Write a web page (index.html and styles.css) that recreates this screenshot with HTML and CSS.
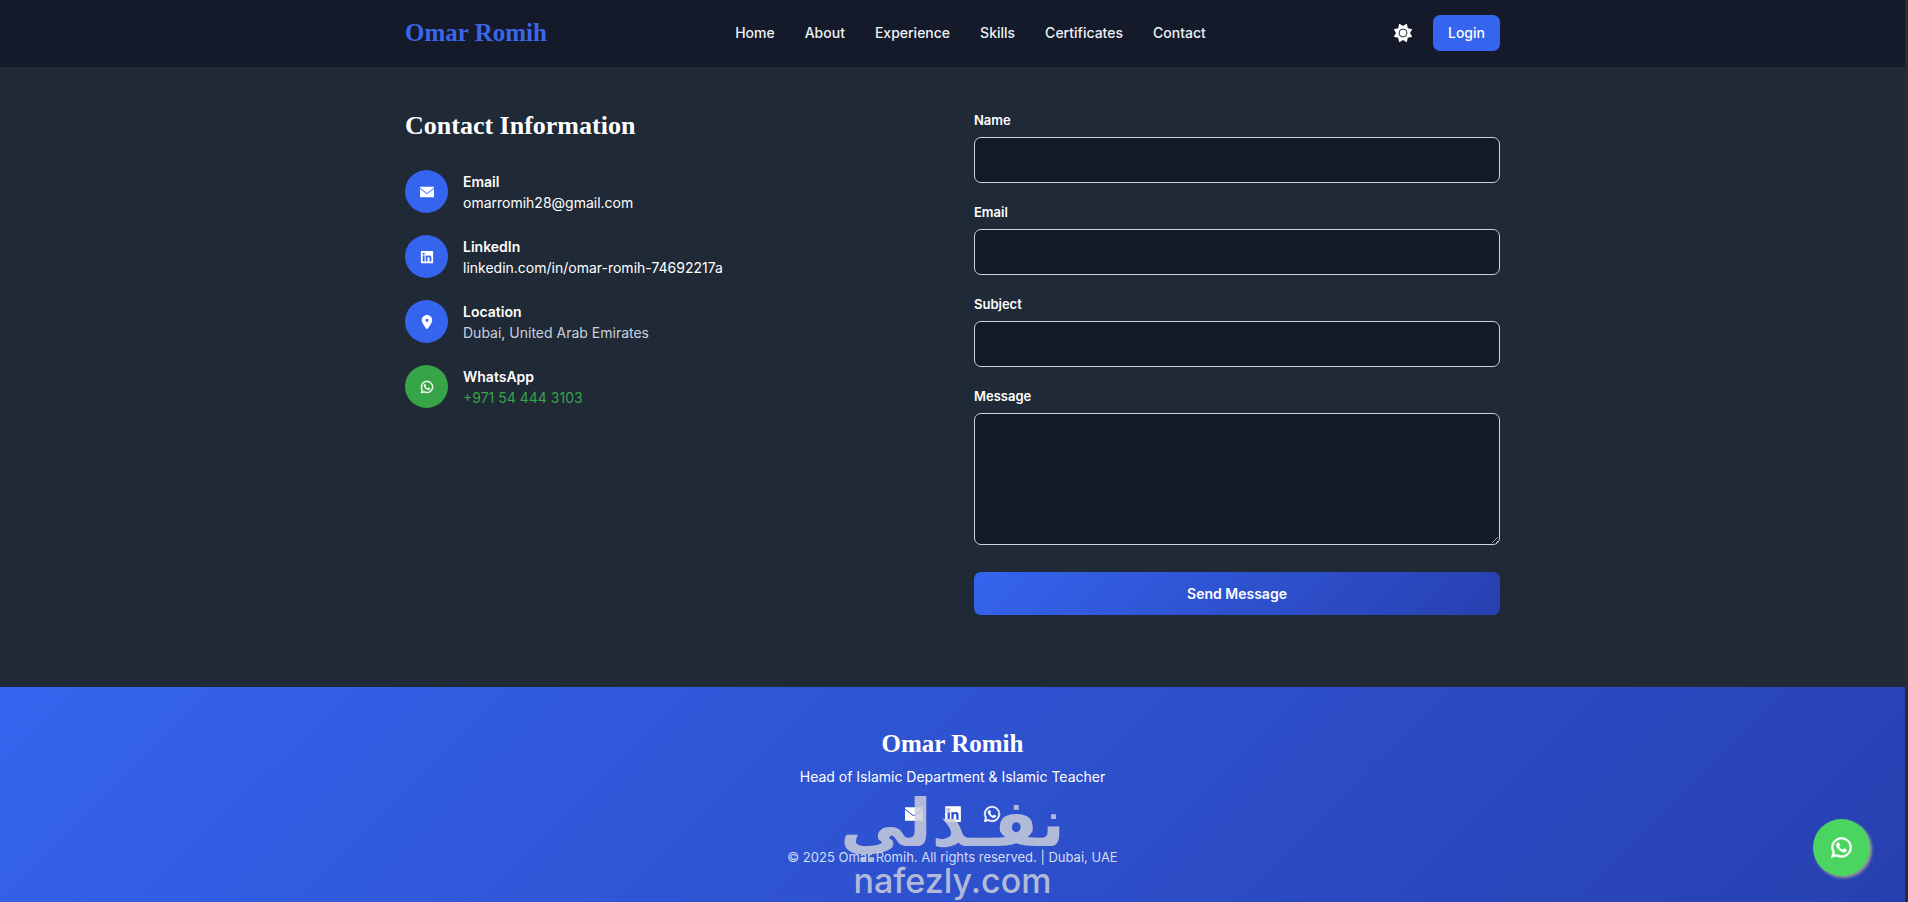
FILE: index.html
```html
<!doctype html>
<html lang="en">
<head>
    <meta charset="utf-8">
    <meta name="viewport" content="width=device-width, initial-scale=1">
    <title>Omar Romih</title>
    <link rel="stylesheet" href="styles.css">
</head>
<body>

<svg class="sprite" aria-hidden="true">
    <symbol id="icon-mail" viewBox="0 0 512 512">
        <path d="M16 64H496c9 0 16 7 16 16v24L276 286c-12 9-28 9-40 0L0 104V80c0-9 7-16 16-16zM0 136L222 308c20 15 48 15 68 0L512 136V432c0 9-7 16-16 16H16c-9 0-16-7-16-16V136z"/>
    </symbol>
    <symbol id="icon-linkedin" viewBox="0 0 448 512">
        <path d="M432 32H16C7 32 0 39 0 48v416c0 9 7 16 16 16h416c9 0 16-7 16-16V48c0-9-7-16-16-16zM135.400 416H69V202.200h66.500V416zm-33.200-243c-21.300 0-38.500-17.300-38.500-38.500S80.900 96 102.200 96c21.200 0 38.500 17.300 38.500 38.500 0 21.300-17.200 38.500-38.500 38.500zm282.100 243h-66.400V312c0-24.800-.5-56.700-34.500-56.700-34.600 0-39.900 27-39.900 54.900V416h-66.400V202.200h63.700v29.200h.9c8.900-16.800 30.600-34.500 62.900-34.500 67.200 0 79.700 44.300 79.700 101.900V416z"/>
    </symbol>
    <symbol id="icon-pin" viewBox="0 0 384 512">
        <path d="M215.700 499.200C267 435 384 279.400 384 192C384 86 298 0 192 0S0 86 0 192c0 87.400 117 243 168.300 307.200c12.300 15.300 35.100 15.300 47.400 0zM192 136a56 56 0 1 1 0 112 56 56 0 1 1 0-112z"/>
    </symbol>
    <symbol id="icon-whatsapp" viewBox="0 0 448 512">
        <path stroke="currentColor" stroke-width="14" d="M380.900 97.100C339 55.100 283.200 32 223.900 32c-122.400 0-222 99.600-222 222 0 39.100 10.200 77.300 29.600 111L0 480l117.700-30.900c32.400 17.700 68.900 27 106.100 27h.1c122.300 0 224.100-99.600 224.100-222 0-59.300-25.200-115-67.100-157zm-157 341.600c-33.200 0-65.700-8.900-94-25.700l-6.700-4-69.800 18.300L72 359.200l-4.400-7c-18.500-29.400-28.200-63.300-28.200-98.200 0-101.700 82.800-184.500 184.600-184.500 49.300 0 95.600 19.200 130.400 54.100 34.800 34.900 56.200 81.200 56.100 130.500 0 101.800-84.900 184.600-186.600 184.600zm101.200-138.200c-5.500-2.800-32.800-16.200-37.900-18-5.100-1.900-8.800-2.800-12.500 2.800-3.700 5.600-14.300 18-17.600 21.800-3.200 3.700-6.500 4.200-12 1.400-32.600-16.300-54-29.100-75.500-66-5.700-9.800 5.700-9.100 16.300-30.300 1.800-3.700.9-6.900-.5-9.700-1.400-2.800-12.500-30.100-17.100-41.200-4.500-10.800-9.100-9.300-12.500-9.500-3.200-.2-6.900-.2-10.600-.2-3.700 0-9.700 1.400-14.800 6.900-5.100 5.600-19.400 19-19.400 46.300 0 27.300 19.900 53.700 22.600 57.400 2.800 3.700 39.100 59.700 94.800 83.800 35.200 15.200 49 16.500 66.600 13.900 10.700-1.600 32.800-13.400 37.400-26.400 4.600-13 4.600-24.100 3.200-26.400-1.300-2.500-5-3.900-10.500-6.600z"/>
    </symbol>
    <symbol id="icon-sun" viewBox="0 0 512 512">
        <path d="M361.500 1.200c5 2.100 8.600 6.600 9.600 11.900L391 121l107.900 19.800c5.300 1 9.800 4.600 11.900 9.600s1.500 10.700-1.600 15.200L456 256l53.200 90.300c3.100 4.500 3.700 10.200 1.600 15.200s-6.600 8.600-11.900 9.600L391 391 371.100 498.900c-1 5.300-4.600 9.800-9.600 11.900s-10.700 1.500-15.200-1.600L256 456l-90.300 53.200c-4.500 3.100-10.200 3.700-15.200 1.600s-8.600-6.600-9.600-11.900L121 391 13.100 371.100c-5.300-1-9.800-4.600-11.900-9.600s-1.500-10.700 1.600-15.200L56 256 2.800 165.700c-3.100-4.500-3.700-10.200-1.600-15.200s6.600-8.600 11.900-9.600L121 121 140.900 13.100c1-5.300 4.600-9.800 9.600-11.900s10.700-1.500 15.200 1.600L256 56 346.300 2.800c4.500-3.100 10.200-3.700 15.200-1.600z"/>
        <circle cx="256" cy="256" r="112" fill="none" stroke="#141a29" stroke-width="26"/>
    </symbol>
</svg>

<header class="navbar">
    <div class="container navbar-inner">
        <a class="logo" href="#home">Omar Romih</a>
        <nav class="menu">
            <a href="#home">Home</a>
            <a href="#about">About</a>
            <a href="#experience">Experience</a>
            <a href="#skills">Skills</a>
            <a href="#certificates">Certificates</a>
            <a href="#contact">Contact</a>
        </nav>
        <div class="actions">
            <button class="theme-toggle" type="button" aria-label="Toggle theme">
                <svg class="icon-md"><use href="#icon-sun"/></svg>
            </button>
            <a class="login" href="#login">Login</a>
        </div>
    </div>
</header>

<main class="contact" id="contact">
    <div class="container contact-grid">
        <section>
            <h2 class="contact-title">Contact Information</h2>
            <ul class="contact-list">
                <li class="contact-item">
                    <span class="badge"><svg class="icon-sm"><use href="#icon-mail"/></svg></span>
                    <div>
                        <h3>Email</h3>
                        <a href="mailto:omarromih28@gmail.com">omarromih28@gmail.com</a>
                    </div>
                </li>
                <li class="contact-item">
                    <span class="badge"><svg class="icon-sm"><use href="#icon-linkedin"/></svg></span>
                    <div>
                        <h3>LinkedIn</h3>
                        <a href="#linkedin">linkedin.com/in/omar-romih-74692217a</a>
                    </div>
                </li>
                <li class="contact-item">
                    <span class="badge"><svg class="icon-sm"><use href="#icon-pin"/></svg></span>
                    <div>
                        <h3>Location</h3>
                        <p>Dubai, United Arab Emirates</p>
                    </div>
                </li>
                <li class="contact-item">
                    <span class="badge badge-green"><svg class="icon-sm"><use href="#icon-whatsapp"/></svg></span>
                    <div>
                        <h3>WhatsApp</h3>
                        <a class="phone" href="tel:+971544443103">+971 54 444 3103</a>
                    </div>
                </li>
            </ul>
        </section>

        <form class="contact-form">
            <div class="field">
                <label for="name">Name</label>
                <input type="text" id="name" name="name">
            </div>
            <div class="field">
                <label for="email">Email</label>
                <input type="email" id="email" name="email">
            </div>
            <div class="field">
                <label for="subject">Subject</label>
                <input type="text" id="subject" name="subject">
            </div>
            <div class="field">
                <label for="message">Message</label>
                <textarea id="message" name="message"></textarea>
            </div>
            <button class="send" type="submit">Send Message</button>
        </form>
    </div>
</main>

<footer class="footer">
    <h2 class="footer-title">Omar Romih</h2>
    <p class="footer-role">Head of Islamic Department &amp; Islamic Teacher</p>
    <div class="social">
        <a href="mailto:omarromih28@gmail.com" aria-label="Email"><svg class="icon-md"><use href="#icon-mail"/></svg></a>
        <a href="#linkedin" aria-label="LinkedIn"><svg class="icon-md"><use href="#icon-linkedin"/></svg></a>
        <a href="#whatsapp" aria-label="WhatsApp"><svg class="icon-md"><use href="#icon-whatsapp"/></svg></a>
    </div>
    <p class="copyright">© 2025 Omar Romih. All rights reserved. | Dubai, UAE</p>
    <div class="watermark">
        <span class="watermark-ar" lang="ar" dir="rtl">نفـذلي</span>
        <span class="watermark-en">nafezly.com</span>
    </div>
</footer>

<a class="whatsapp-float" href="#whatsapp" aria-label="Chat on WhatsApp">
    <svg class="icon-lg"><use href="#icon-whatsapp"/></svg>
</a>

</body>
</html>
```
FILE: styles.css
```css
* {
    box-sizing: border-box;
    margin: 0;
    padding: 0;
}

html {
    background: #2b2b2b;
}

body {
    display: flex;
    flex-direction: column;
    min-height: 100vh;
    margin-right: 3px;
    background: #202936;
    color: #fff;
    font-family: Inter, "Liberation Sans", sans-serif;
    font-size: 14px;
    line-height: 22px;
}

a {
    color: inherit;
    text-decoration: none;
}

svg {
    display: block;
    overflow: visible;
    fill: currentColor;
}

.sprite {
    display: none;
}

.icon-sm {
    width: 14px;
    height: 14px;
}

.icon-md {
    width: 18px;
    height: 18px;
}

.icon-lg {
    width: 23px;
    height: 23px;
}

.container {
    width: 100%;
    max-width: 1095px;
    margin: 0 auto;
}

/* navbar */

.navbar {
    border-bottom: 1px solid #111826;
    background: #141a29;
}

.navbar-inner {
    display: flex;
    align-items: center;
    justify-content: space-between;
    height: 66px;
}

.logo,
.footer-title,
.contact-title {
    font-family: "Liberation Serif", serif;
    font-weight: bold;
    line-height: 28px;
}

.logo,
.footer-title {
    font-size: 25px;
}

.logo {
    color: #3b66e8;
}

.menu {
    display: flex;
    gap: 30px;
    font-weight: 500;
    color: #eef1f7;
}

.actions {
    display: flex;
    align-items: center;
    gap: 21px;
}

.theme-toggle {
    border: 0;
    background: none;
    color: #fff;
}

.login {
    padding: 7px 15px;
    border-radius: 7px;
    background: #3564ee;
    font-weight: 500;
}

/* contact */

.contact {
    padding: 45px 0 72px;
}

.contact-grid {
    display: grid;
    grid-template-columns: 1fr 1fr;
    gap: 43px;
}

.contact-title {
    margin-bottom: 30px;
    font-size: 26px;
}

.contact-list {
    display: flex;
    flex-direction: column;
    gap: 22px;
    list-style: none;
}

.contact-item {
    display: flex;
    align-items: center;
    gap: 15px;
    height: 43px;
    line-height: 21px;
}

.contact-item h3 {
    font-size: 14px;
    font-weight: 600;
}

.contact-item p {
    color: #cbd2de;
}

.contact-item .phone {
    color: #37a447;
}

.badge {
    display: flex;
    align-items: center;
    justify-content: center;
    width: 43px;
    height: 43px;
    border-radius: 50%;
    background: #3564ee;
}

.badge-green {
    background: #37a447;
}

.field {
    display: flex;
    flex-direction: column;
    gap: 9px;
    margin-bottom: 21px;
}

.field label {
    font-size: 13px;
    font-weight: 600;
    line-height: 16px;
}

.field input,
.field textarea {
    width: 100%;
    height: 46px;
    padding: 11px 14px;
    border: 1px solid #cbd5e1;
    border-radius: 7px;
    background: #131926;
    color: #fff;
    font: inherit;
}

.field textarea {
    height: 132px;
    margin-bottom: 6px;
    resize: vertical;
}

.send {
    display: block;
    width: 100%;
    height: 43px;
    border: 0;
    border-radius: 7px;
    background: linear-gradient(135deg, #3564ee, #2740b0);
    color: #fff;
    font: inherit;
    font-weight: 600;
}

/* footer */

.footer {
    position: relative;
    flex: 1;
    display: flex;
    flex-direction: column;
    align-items: center;
    padding: 43px 0 29px;
    background: linear-gradient(135deg, #3564ee, #2740b0);
    text-align: center;
}

.footer-role {
    margin-top: 8px;
}

.social {
    display: flex;
    gap: 21px;
    margin: 17px 0 23px;
}

.copyright {
    color: #d5dcf5;
    font-size: 13px;
}

.watermark {
    position: absolute;
    top: 97px;
    left: 50%;
    display: flex;
    flex-direction: column;
    align-items: center;
    transform: translateX(-50%);
    color: #c9cddb;
    opacity: 0.85;
}

.watermark-ar {
    font-family: "DejaVu Sans", sans-serif;
    font-size: 66px;
    font-weight: bold;
    line-height: 80px;
}

.watermark-en {
    font-size: 34px;
    font-weight: 500;
    line-height: 34px;
}

.whatsapp-float {
    position: fixed;
    right: 38px;
    bottom: 26px;
    display: flex;
    align-items: center;
    justify-content: center;
    width: 57px;
    height: 57px;
    border-radius: 50%;
    background: #4ad561;
    box-shadow: 2px 2px 3px #999;
}
```
